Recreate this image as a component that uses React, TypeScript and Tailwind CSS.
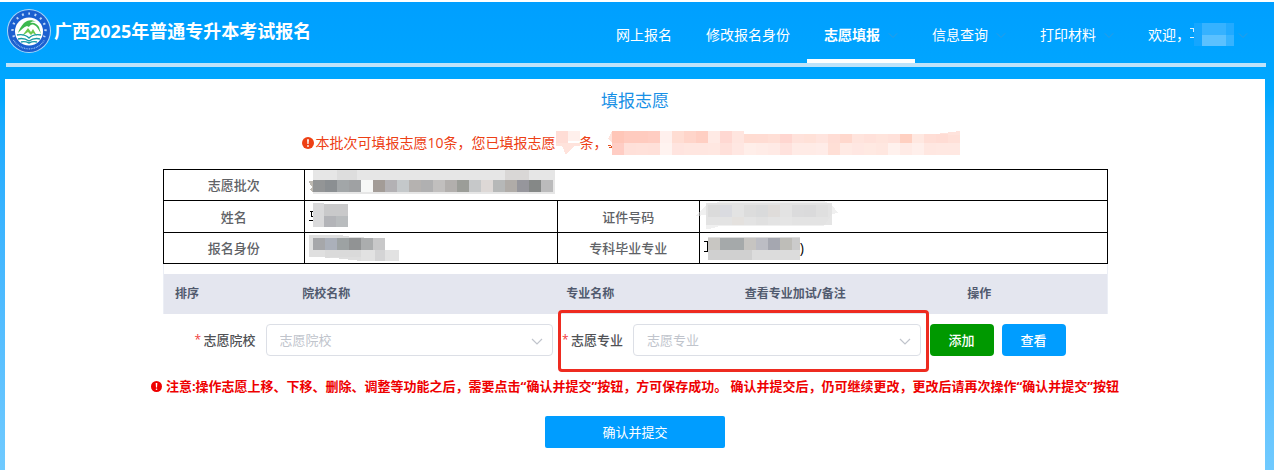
import type { FormEvent, ReactNode } from "react";

type NavItem = {
  label: string;
  active?: boolean;
  dropdown?: boolean;
};

type Block = [x: number, y: number, width: number, height: number, fill: string];

const navItems: NavItem[] = [
  { label: "网上报名" },
  { label: "修改报名身份" },
  { label: "志愿填报", active: true, dropdown: true },
  { label: "信息查询", dropdown: true },
  { label: "打印材料", dropdown: true }
];

const columns = [
  { title: "排序", width: "w-[5%]" },
  { title: "院校名称", width: "w-[24.5%]" },
  { title: "专业名称", width: "w-[31.5%]" },
  { title: "查看专业加试/备注", width: "w-[12%]" },
  { title: "操作", width: "w-[27%]" }
];

const batchColors = [
  "#939596", "#8b8f92", "#a2a6a8", "#9fa1a3", "#f7f8f7", "#a39c97", "#b3b1b4", "#c4c8ca",
  "#b5b2b0", "#b0b0b1", "#c1bfbe", "#b2afad", "#9b9d98", "#c6c8c9", "#ddd8d6", "#b6b8b8",
  "#b0aca8", "#96969c", "#858887", "#bbbbbc"
];

const quotaTop = [
  "#ffc6b8", "#ffcbbf", "#ffcbbf", "#ffcdc2", "#fff0ed", "#ffddd3", "#ffd5ca", "#ffcfc3",
  "#ffeae5", "#ffd8d2", "#ffe5df", "#ffdcd2", "#ffdcd3", "#ffdfd6", "#ffd6d0", "#ffe2db",
  "#ffe1d8", "#ffe4de", "#ffddd5", "#ffd8cd", "#ffe4dd", "#ffe1da", "#ffe4dc", "#ffe1da",
  "#ffd0c1", "#ffe8e1", "#ffded6", "#ffdcd4", "#ffe0d8"
];

const quotaBottom = [
  "#ffcdc4", "#ffe0d9", "#ffe1da", "#ffe0d9", "#fff3f0", "#ffe4df", "#ffe6e0", "#ffe6e0",
  "#ffe7e1", "#ffe0da", "#ffe7e2", "#ffeee9", "#ffece7", "#ffeae5", "#ffe2dd", "#ffebe6",
  "#ffebe6", "#ffece8", "#ffdfd6", "#ffeae4", "#ffe7e2", "#ffe9e2", "#ffe7e0", "#fff1ed",
  "#ffebe6", "#ffefeb", "#ffe7e1", "#ffe8e2", "#ffe8e2"
];

export default function App() {
  const handleSubmit = (event: FormEvent) => {
    event.preventDefault();
  };

  return (
    <div className="flex min-h-screen flex-col border-t-2 border-white bg-linear-to-b from-[#009fff] via-[#00a8ff] via-20% to-[#70caff] font-['Open_Sans','Noto_Sans_CJK_SC',sans-serif] text-[13px] leading-5">
      <header className="mr-2 ml-[6px] flex h-[65px] items-stretch justify-between border-b-4 border-[#bfe3fa]">
        <div className="flex items-center gap-[2px]">
          <Logo />
          <h1 className="pb-1 text-lg font-bold whitespace-nowrap text-white">广西2025年普通专升本考试报名</h1>
        </div>
        <nav className="flex items-stretch pr-px text-sm whitespace-nowrap text-white">
          {navItems.map((item) => (
            <a
              key={item.label}
              href="#"
              aria-current={item.active ? "page" : undefined}
              className={`flex items-center border-b-4 px-[17px] pt-2 ${
                item.active ? "border-white font-bold" : "border-transparent"
              }`}
            >
              {item.label}
              {item.dropdown ? <Chevron className="ml-2 h-[10px] w-[10px] text-[#2f9be0]" /> : null}
            </a>
          ))}
          <a href="#" className="flex items-center border-b-4 border-transparent px-[17px] pt-2">
            欢迎，
            <Mosaic
              className="h-6 w-[44px]"
              width={44}
              height={24}
              blocks={[
                [4, 0, 8, 23, "#15a6ff"], [12, 0, 24, 12, "#36b2ff"], [12, 12, 24, 11, "#5bc1ff"],
                [36, 0, 8, 12, "#22aaff"], [36, 12, 8, 11, "#36b3ff"]
              ]}
            >
              <path d="M0 5h4M3 5v4M0 14h4" fill="none" stroke="#d9f0ff" />
            </Mosaic>
            <Chevron className="ml-1 h-[10px] w-[10px] text-[#2f9be0]" />
          </a>
        </nav>
      </header>

      <main className="mr-[9px] ml-[5px] mt-3 flex-1 bg-white pt-[10px]">
        <h2 className="text-center text-[17px] leading-6 text-[#1890e6]">填报志愿</h2>

        <p className="mt-5 flex h-5 items-center justify-center pr-2 text-sm leading-5 whitespace-nowrap text-[#ed4014]">
          <Warning className="mr-px h-3 w-3" />
          本批次可填报志愿10条，您已填报志愿
          <Mosaic className="h-6 w-6" width={24} height={24} blocks={[[0, 0, 12, 12, "#ffddd6"], [12, 0, 12, 10, "#fff0ec"]]}>
            <path d="M0 12h24v3H18l-8 9-4-9H0z" fill="#ffe3dc" />
          </Mosaic>
          条，
          <Mosaic
            className="h-6 w-[352px]"
            width={352}
            height={24}
            blocks={[
              ...quotaTop.map((fill, i): Block => [4 + i * 12, i < 11 ? 0 : 3, 12, i < 11 ? 12 : 9, fill]),
              ...quotaBottom.map((fill, i): Block => [4 + i * 12, 12, 12, 12, fill])
            ]}
          >
            <path d="M0 8l4-8v12zM328 3l24-3v4z" fill="#ffe3dc" />
            <path d="M0 14h2l2 2M1 16l3 1" fill="none" stroke="#e4501c" />
          </Mosaic>
        </p>

        <div className="mx-auto mt-4 w-3/4">
          <table className="w-full table-fixed border-collapse border border-black text-black">
            <colgroup>
              <col className="w-[15%]" />
              <col className="w-[26.8%]" />
              <col className="w-[15%]" />
              <col className="w-[43.2%]" />
            </colgroup>
            <tbody>
              <tr className="h-[31px]">
                <LabelCell>志愿批次</LabelCell>
                <ValueCell colSpan={3}>
                  <Mosaic
                    className="h-6 w-[246px]"
                    width={246}
                    height={24}
                    blocks={[
                      [4, 0, 242, 24, "#e6e6e6"], [28, 0, 20, 11, "#dddddd"], [196, 0, 24, 11, "#d9d7d6"],
                      ...batchColors.map((fill, i): Block => [4 + i * 12, 10, 12, 12, fill])
                    ]}
                  >
                    <path d="M0 11h4v11l-3-2 2-3-2-2z" fill="#bdb9b2" />
                  </Mosaic>
                </ValueCell>
              </tr>
              <tr className="h-8">
                <LabelCell>姓名</LabelCell>
                <ValueCell>
                  <Mosaic
                    className="mt-[2px] h-6 w-12"
                    width={48}
                    height={24}
                    blocks={[
                      [4, 0, 11, 24, "#d9d9da"], [15, 1, 24, 12, "#c9c9ca"], [15, 13, 12, 11, "#b3b4b8"],
                      [27, 13, 12, 11, "#b9bcbe"]
                    ]}
                  >
                    <path d="M1 8h3M2 8v5h2M0 17h4" fill="none" stroke="#000" />
                  </Mosaic>
                </ValueCell>
                <LabelCell>证件号码</LabelCell>
                <ValueCell>
                  <Mosaic
                    className="-ml-2 h-[28px] w-[142px]"
                    width={142}
                    height={28}
                    blocks={[
                      [10, 2, 126, 22, "#e5e5e5"], [12, 4, 12, 12, "#d4d4d5"], [24, 4, 12, 12, "#d2d5de"],
                      [48, 4, 12, 12, "#d6d6d7"], [60, 4, 12, 12, "#d1d2d5"], [72, 4, 12, 12, "#ddd6d3"],
                      [96, 4, 12, 12, "#d5d5d6"], [108, 4, 12, 12, "#d2d3d5"], [120, 4, 12, 12, "#dcdcdc"],
                      [36, 16, 12, 8, "#e7e0da"], [60, 16, 12, 8, "#dedede"], [84, 16, 12, 8, "#e8e8e9"]
                    ]}
                  >
                    <path d="M0 15L12 2h8l4-2h104l8 4 6 8-6 1-8 12H24l-14 4V14z" fill="#e2e2e2" fillOpacity="0.5" />
                  </Mosaic>
                </ValueCell>
              </tr>
              <tr className="h-[31px]">
                <LabelCell>报名身份</LabelCell>
                <ValueCell>
                  <Mosaic
                    className="mt-[2px] h-[26px] w-[92px]"
                    width={92}
                    height={26}
                    blocks={[
                      [0, 0, 34, 22, "#dfdfdf"], [4, 3, 12, 12, "#a6a7aa"], [16, 3, 12, 12, "#abb0ba"],
                      [28, 3, 12, 12, "#9da2a3"], [40, 3, 12, 12, "#919394"], [52, 3, 12, 12, "#abadae"],
                      [64, 3, 12, 12, "#c8c8c9"], [16, 15, 36, 8, "#dadada"], [52, 15, 38, 11, "#e2e2e2"],
                      [66, 15, 10, 11, "#d4d4d5"]
                    ]}
                  >
                    <path d="M32 3V1l30 2zM16 22h36v4z" fill="#dedede" />
                  </Mosaic>
                </ValueCell>
                <LabelCell>专科毕业专业</LabelCell>
                <ValueCell>
                  <span className="flex h-[30px] items-center text-sm">
                    <Mosaic
                      className="h-6 w-24"
                      width={96}
                      height={24}
                      blocks={[
                        [4, 1, 92, 23, "#dcdcdc"], [4, 2, 12, 12, "#c8c6c2"], [16, 2, 24, 12, "#a5a9aa"],
                        [40, 2, 12, 12, "#c6c4c1"], [52, 2, 12, 12, "#bcbdc4"], [64, 2, 12, 12, "#a5a7b0"],
                        [76, 2, 12, 12, "#bebdb8"], [88, 2, 8, 12, "#cbcbcb"], [4, 14, 44, 10, "#d0d0d0"]
                      ]}
                    >
                      <path d="M0 5h4M3 5v10M0 15h4" fill="none" stroke="#000" />
                    </Mosaic>
                    )
                  </span>
                </ValueCell>
              </tr>
            </tbody>
          </table>

          <div className="border-x border-[#ebeef5] pt-[10px]">
            <table className="w-full table-fixed">
              <thead>
                <tr className="h-10 bg-[#e4e6ef] text-xs font-bold whitespace-nowrap text-[#515a6e]">
                  {columns.map((column) => (
                    <th key={column.title} scope="col" className={column.width}>
                      {column.title}
                    </th>
                  ))}
                </tr>
              </thead>
            </table>
          </div>

          <form onSubmit={handleSubmit}>
            <div className="mt-[10px] flex items-center pr-[42px] pl-8 whitespace-nowrap">
              <SelectField id="college" label="志愿院校" />
              <div className="relative ml-[9px] flex flex-1">
                <SelectField id="major" label="志愿专业" />
                <div className="pointer-events-none absolute -top-[14px] -right-2 -bottom-4 -left-1 rounded-sm border-3 border-[#ee2b20]" />
              </div>
              <button type="button" className="ml-[9px] h-8 w-16 rounded bg-[#009900] font-medium text-white">
                添加
              </button>
              <button type="button" className="ml-2 h-8 w-16 rounded bg-[#009dff] font-medium text-white">
                查看
              </button>
            </div>

            <p className="mt-5 flex items-center justify-center gap-1 font-bold whitespace-nowrap text-[#ee0000]">
              <Warning className="h-[11px] w-[11px] shrink-0" />
              注意:操作志愿上移、下移、删除、调整等功能之后，需要点击“确认并提交”按钮，方可保存成功。 确认并提交后，仍可继续更改，更改后请再次操作“确认并提交”按钮
            </p>

            <button type="submit" className="mx-auto mt-5 block h-8 w-[180px] rounded-xs bg-[#009dff] text-white">
              确认并提交
            </button>
          </form>
        </div>
      </main>
    </div>
  );
}

function LabelCell({ children }: { children: ReactNode }) {
  return (
    <th scope="row" className="border border-black p-0 text-center font-medium text-[#606266]">
      {children}
    </th>
  );
}

function ValueCell({ children, colSpan }: { children: ReactNode; colSpan?: number }) {
  return (
    <td colSpan={colSpan} className="border border-black py-0 pr-0 pl-1 align-top">
      {children}
    </td>
  );
}

function SelectField({ id, label }: { id: string; label: string }) {
  return (
    <div className="flex flex-1 items-center">
      <label htmlFor={id} className="mr-[10px] flex items-center gap-1 font-medium text-[#505256]">
        <span className="w-[5px] text-xs font-normal text-[#f04040]">*</span>
        {label}
      </label>
      <div className="relative flex-1">
        <select
          id={id}
          defaultValue=""
          className="h-8 w-full appearance-none rounded border border-[#dcdfe6] bg-white pl-[13px] text-[#c0c4cc] outline-none focus:border-[#009dff]"
        >
          <option value="">{label}</option>
        </select>
        <Chevron className="pointer-events-none absolute top-[11px] right-[10px] h-3 w-3 text-[#c0c4cc]" />
      </div>
    </div>
  );
}

function Chevron({ className }: { className: string }) {
  return (
    <svg viewBox="0 0 12 12" className={className} fill="none" stroke="currentColor" strokeWidth="1.2" aria-hidden="true">
      <path d="M1 4l5 5 5-5" />
    </svg>
  );
}

function Warning({ className }: { className: string }) {
  return (
    <svg viewBox="0 0 12 12" className={className} aria-hidden="true">
      <circle cx="6" cy="6" r="6" fill="currentColor" />
      <path d="M5.1 2.2h1.8L6.6 7H5.4z" fill="#fff" />
      <circle cx="6" cy="9" r="0.9" fill="#fff" />
    </svg>
  );
}

// Censored personal data, drawn as a strip of flat blocks
function Mosaic({
  className,
  width,
  height,
  blocks,
  children
}: {
  className: string;
  width: number;
  height: number;
  blocks: Block[];
  children?: ReactNode;
}) {
  return (
    <svg
      viewBox={`0 0 ${width} ${height}`}
      className={`block shrink-0 ${className}`}
      shapeRendering="crispEdges"
      aria-hidden="true"
    >
      {blocks.map(([x, y, w, h, fill], i) => (
        <rect key={i} x={x} y={y} width={w} height={h} fill={fill} />
      ))}
      {children}
    </svg>
  );
}

function Logo() {
  return (
    <svg viewBox="0 0 46 46" className="mb-[3px] h-[46px] w-[46px]" aria-hidden="true">
      <circle cx="23" cy="23" r="22" fill="#a9d6f8" />
      <circle cx="23" cy="23" r="21" fill="#1a5fd0" />
      <path
        d="M8 29A16.500 16.500 0 1 1 38 29"
        fill="none"
        stroke="#e4f1ff"
        strokeWidth="2.4"
        strokeDasharray="1.8 4.6"
        opacity="0.8"
      />
      <path
        d="M7.500 32A18 18 0 0 0 38.500 32"
        fill="none"
        stroke="#b8d8fb"
        strokeWidth="1.200"
        strokeDasharray="0.9 0.8"
        opacity="0.8"
      />
      <circle cx="23" cy="23.500" r="14" fill="#fff" />
      <path d="M12 25c1-3 3-7 6-10 3-3 8-4 12-1-3-1-5 0-6 1 4-1 7 1 9 4l2 7c-2-4-4-8-7-9-2-1-4 0-5 2l-2-1c-3 1-6 4-9 7z" fill="#3cb84e" />
      <path d="M16 28l6-8 3 4 2-3 4 7-4-3-2 2-3-3z" fill="#6cc94f" />
      <path d="M11 27c5-1 9 0 12 3 3-3 7-4 12-3M12 31c4-1 8 0 11 2 3-2 7-3 11-2M15 34c3-1 6 0 8 1 2-1 5-2 8-1" fill="none" stroke="#179aa6" strokeWidth="1.400" />
    </svg>
  );
}
